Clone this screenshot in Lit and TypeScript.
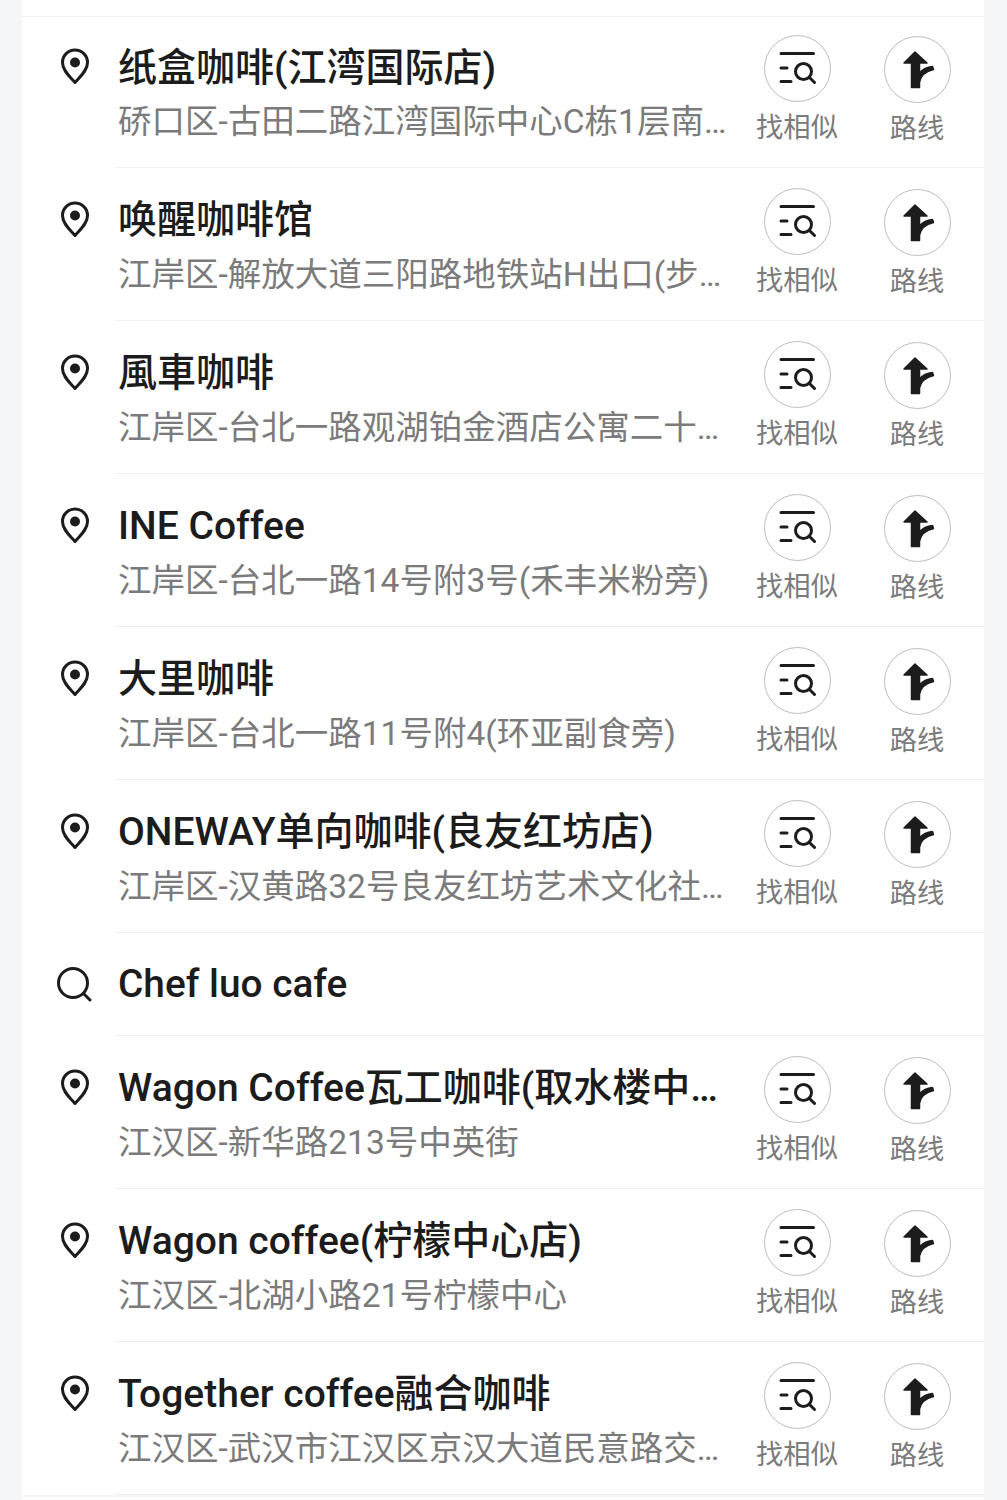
import { css, html, LitElement } from 'lit';
import { customElement } from 'lit/decorators.js';

type Place = { name: string; addr: string };

const FIRST: Place[] = [
  { name: '纸盒咖啡(江湾国际店)', addr: '硚口区-古田二路江湾国际中心C栋1层南侧商铺' },
  { name: '唤醒咖啡馆', addr: '江岸区-解放大道三阳路地铁站H出口(步行100米)' },
  { name: '風車咖啡', addr: '江岸区-台北一路观湖铂金酒店公寓二十三楼' },
  { name: 'INE Coffee', addr: '江岸区-台北一路14号附3号(禾丰米粉旁)' },
  { name: '大里咖啡', addr: '江岸区-台北一路11号附4(环亚副食旁)' },
  { name: 'ONEWAY单向咖啡(良友红坊店)', addr: '江岸区-汉黄路32号良友红坊艺术文化社区内' },
];

const SECOND: Place[] = [
  { name: 'Wagon Coffee瓦工咖啡(取水楼中心店)', addr: '江汉区-新华路213号中英街' },
  { name: 'Wagon coffee(柠檬中心店)', addr: '江汉区-北湖小路21号柠檬中心' },
  { name: 'Together coffee融合咖啡', addr: '江汉区-武汉市江汉区京汉大道民意路交叉口' },
];

const pin = html`<svg class="pin" viewBox="0 0 32 38" fill="none">
  <path d="M16 35.500 C11.500 30 3.500 24 3.500 15.500 A12.500 12.500 0 0 1 28.500 15.500 C28.500 24 20.500 30 16 35.500 Z" stroke="#1c1c1c" stroke-width="3" stroke-linejoin="round"/>
  <circle cx="16" cy="15.500" r="5" fill="#1c1c1c"/>
</svg>`;

const findIcon = html`<svg viewBox="0 0 67 67" fill="none" stroke="#1c1c1c" stroke-width="3" stroke-linecap="round">
  <path d="M17 18.500 H49.500 M17 33 H23 M17 46.500 H27"/>
  <circle cx="39.500" cy="36.500" r="8"/>
  <path d="M45.500 42.500 L50.500 47.500"/>
</svg>`;

const routeIcon = html`<svg viewBox="0 0 67 67">
  <path fill="#1c1c1c" stroke="#1c1c1c" stroke-width="1.500" stroke-linejoin="round" d="M31 16 L43 27 H35.500 V37 C38 34 43 31 48.500 30.500 L49.500 33.500 C43 35 37 39 35.500 46 V51.500 H27.500 V27 H20 Z"/>
</svg>`;

@customElement('app-root')
export class AppRoot extends LitElement {
  static override styles = css`
    :host {
      display: block;
      height: 1500px;
      overflow: hidden;
      background: #f5f6f8;
      font-family: Roboto, 'Noto Sans CJK SC', sans-serif;
    }
    .card {
      margin: 0 23px 0 22px;
      background: #fff;
      padding-top: 17px;
      height: 1483px;
    }
    .topline {
      height: 0;
      border-top: 1px solid #f0f0f0;
      margin-top: -1px;
    }
    .row {
      display: flex;
    }
    .lead {
      flex: none;
      width: 93px;
      display: flex;
      justify-content: center;
    }
    .pin {
      width: 32px;
      height: 38px;
      margin-top: 32px;
      margin-left: 13px;
    }
    .body {
      flex: 1;
      min-width: 0;
      display: flex;
      height: 152px;
      border-bottom: 1px solid #f0f0f0;
    }
    .row.first .body {
      height: 150px;
    }
    .row.first .pin {
      margin-top: 30px;
    }
    .row.first .text {
      padding-top: 26px;
    }
    .text {
      flex: none;
      width: 622px;
      padding: 27px 8px 0 3px;
      box-sizing: border-box;
    }
    .row.first .addr {
      margin-top: 6px;
    }
    .name {
      font-size: 39px;
      font-weight: 500;
      line-height: 50px;
      color: #1c1c1c;
      white-space: nowrap;
      overflow: hidden;
      text-overflow: ellipsis;
    }
    .addr {
      margin-top: 7px;
      font-size: 33.500px;
      line-height: 46px;
      color: #7b7b7b;
      white-space: nowrap;
      overflow: hidden;
      text-overflow: ellipsis;
    }
    .actions {
      display: flex;
    }
    .action {
      width: 120px;
      padding-top: 20px;
      display: flex;
      flex-direction: column;
      align-items: center;
    }
    .action.route {
      padding-top: 21px;
    }
    .row.first .action {
      padding-top: 18px;
    }
    .row.first .action.route {
      padding-top: 19px;
    }
    .circle {
      width: 65px;
      height: 65px;
      border: 1px solid #bdbdbd;
      border-radius: 50%;
      display: flex;
      align-items: center;
      justify-content: center;
    }
    .circle svg {
      flex: none;
      width: 67px;
      height: 67px;
    }
    .label {
      margin-top: 6px;
      font-size: 27.300px;
      line-height: 40px;
      color: #7b7b7b;
      white-space: nowrap;
    }
    .query .lead svg {
      width: 38px;
      height: 38px;
      margin-top: 32px;
      margin-left: 10px;
    }
    .query .body {
      height: 102px;
    }
    .query .name {
      padding: 26px 0 0 3px;
      font-size: 38.800px;
    }
    .end {
      height: 2px;
      background: #f5f6f8;
    }
  `;

  private renderPlace(p: Place, first = false) {
    return html`<div class="row ${first ? 'first' : ''}">
      <div class="lead">${pin}</div>
      <div class="body">
        <div class="text">
          <div class="name">${p.name}</div>
          <div class="addr">${p.addr}</div>
        </div>
        <div class="actions">
          <div class="action">
            <div class="circle">${findIcon}</div>
            <div class="label">找相似</div>
          </div>
          <div class="action route">
            <div class="circle">${routeIcon}</div>
            <div class="label">路线</div>
          </div>
        </div>
      </div>
    </div>`;
  }

  override render() {
    return html`<div class="card">
      <div class="topline"></div>
      ${FIRST.map((p, i) => this.renderPlace(p, i === 0))}
      <div class="row query">
        <div class="lead">
          <svg viewBox="0 0 38 38" fill="none" stroke="#1c1c1c" stroke-width="3" stroke-linecap="round">
            <circle cx="18" cy="18" r="14.500"/>
            <path d="M28.500 28.500 L35 35"/>
          </svg>
        </div>
        <div class="body"><div class="name">Chef luo cafe</div></div>
      </div>
      ${SECOND.map((p) => this.renderPlace(p))}
      <div class="end"></div>
    </div>`;
  }
}
